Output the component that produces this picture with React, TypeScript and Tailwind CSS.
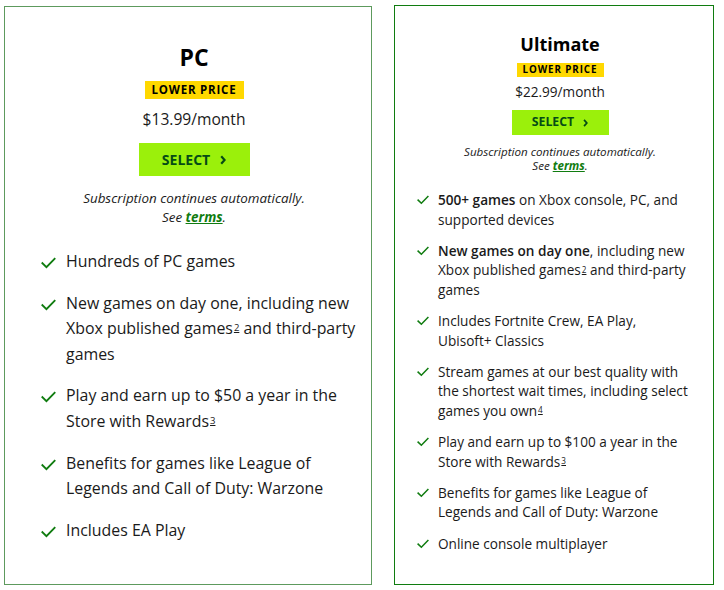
import React from "react";

const font = { fontFamily: '"Open Sans", "Noto Sans", Arial, sans-serif' };

function Check({ w, h }: { w: number; h: number }) {
  return (
    <svg width={w} height={h} viewBox="0 0 16 12" fill="none" className="shrink-0">
      <path d="M1.5 6.2 L5.8 10.4 L14.5 1.5" stroke="#107c10" strokeWidth="2" strokeLinecap="square" />
    </svg>
  );
}

function Chevron({ w, h }: { w: number; h: number }) {
  return (
    <svg width={w} height={h} viewBox="0 0 6 10" fill="none">
      <path d="M1.2 1.2 L4.6 5 L1.2 8.8" stroke="#054b16" strokeWidth="2.2" />
    </svg>
  );
}

function Sup({ n }: { n: string }) {
  return <span className="relative top-[-0.3em] ml-[1px] text-[0.6em] leading-none underline">{n}</span>;
}

export default function App() {
  const pcItems: React.ReactNode[] = [
    <>Hundreds of PC games</>,
    <>New games on day one, including new Xbox published games<Sup n="2" /> and third-party games</>,
    <>Play and earn up to $50 a year in the Store with Rewards<Sup n="3" /></>,
    <>Benefits for games like League of Legends and Call of Duty: Warzone</>,
    <>Includes EA Play</>,
  ];
  const ultItems: React.ReactNode[] = [
    <><b className="font-semibold">500+ games</b> on Xbox console, PC, and supported devices</>,
    <><b className="font-semibold">New games on day one</b>, including new Xbox published games<Sup n="2" /> and third-party games</>,
    <>Includes Fortnite Crew, EA Play, Ubisoft+ Classics</>,
    <>Stream games at our best quality with the shortest wait times, including select games you own<Sup n="4" /></>,
    <>Play and earn up to $100 a year in the Store with Rewards<Sup n="3" /></>,
    <>Benefits for games like League of Legends and Call of Duty: Warzone</>,
    <>Online console multiplayer</>,
  ];

  return (
    <div className="w-[724px] h-[590px] bg-white text-[#1a1a1a] flex items-start gap-[22px] pl-[4px] pt-[5px]" style={font}>
      {/* PC card */}
      <div className="w-[368px] h-[579px] mt-[1px] border border-[#5d9a5d] flex flex-col">
        <div className="flex flex-col items-center pt-[35px] pl-[12px]">
          <div className="text-[23px] leading-[30px] font-bold text-black">PC</div>
          <div className="mt-[9px] w-[99px] h-[18px] bg-[#ffd800] flex items-center justify-center text-[11.5px] font-bold tracking-[0.8px] text-black">
            LOWER PRICE
          </div>
          <div className="mt-[8px] text-[15.6px] leading-[24px]">$13.99/month</div>
          <div className="mt-[12px] w-[111px] h-[33px] bg-[#9bf00b] flex items-center justify-center gap-[10px] text-[14px] font-bold text-[#054b16]">
            <span>SELECT</span>
            <Chevron w={6} h={10} />
          </div>
          <div className="mt-[13px] text-[13.4px] leading-[19px] italic text-center">
            Subscription continues automatically.
            <br />
            See <span className="font-bold underline text-[#107c10]">terms</span>.
          </div>
        </div>
        <ul className="mt-[22px] pl-[36px] pr-[12px] flex flex-col gap-[16.2px]">
          {pcItems.map((it, i) => (
            <li key={i} className="flex items-start gap-[10px] text-[15.9px] leading-[25.5px]">
              <span className="mt-[8px]"><Check w={15} h={12} /></span>
              <span>{it}</span>
            </li>
          ))}
        </ul>
      </div>

      {/* Ultimate card */}
      <div className="w-[320px] h-[580px] border border-[#107c10] flex flex-col">
        <div className="flex flex-col items-center pt-[25px] pl-[12px]">
          <div className="text-[18px] leading-[26px] font-bold text-black">Ultimate</div>
          <div className="mt-[6px] w-[87px] h-[14px] bg-[#ffd800] flex items-center justify-center text-[9.8px] font-bold tracking-[0.9px] text-black">
            LOWER PRICE
          </div>
          <div className="mt-[5px] text-[13.6px] leading-[20px]">$22.99/month</div>
          <div className="mt-[8px] w-[97px] h-[25px] bg-[#9bf00b] flex items-center justify-center gap-[9px] text-[12.3px] font-bold text-[#054b16]">
            <span>SELECT</span>
            <Chevron w={5} h={8} />
          </div>
          <div className="mt-[10px] text-[11.6px] leading-[13.5px] italic text-center">
            Subscription continues automatically.
            <br />
            See <span className="font-bold underline text-[#107c10]">terms</span>.
          </div>
        </div>
        <ul className="mt-[18px] pl-[22px] pr-[22px] flex flex-col gap-[11.8px]">
          {ultItems.map((it, i) => (
            <li key={i} className="flex items-start gap-[9px] text-[13.6px] leading-[19.5px]">
              <span className="mt-[5px]"><Check w={12} h={10} /></span>
              <span>{it}</span>
            </li>
          ))}
        </ul>
      </div>
    </div>
  );
}
